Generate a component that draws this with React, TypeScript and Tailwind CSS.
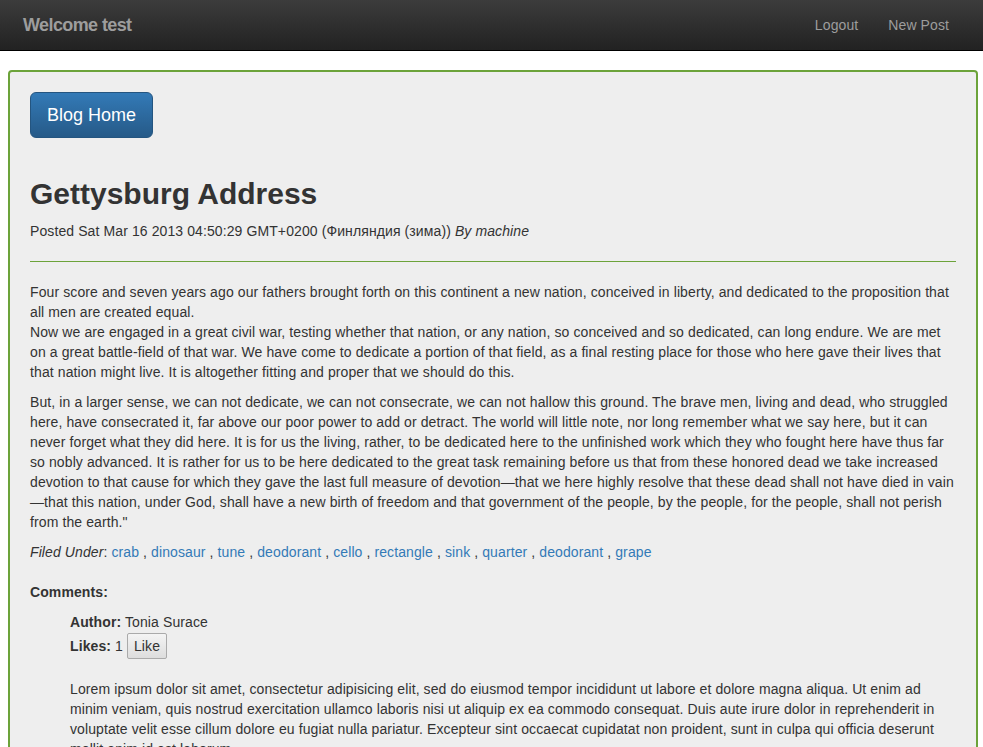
const tags = ["crab", "dinosaur", "tune", "deodorant", "cello", "rectangle", "sink", "quarter", "deodorant", "grape"];

export default function App() {
  return (
    <div className="min-h-screen bg-white text-[14px] leading-[20px] tracking-[0.1px] text-[#333] font-['Liberation_Sans',Arial,sans-serif]">
      {/* Navbar */}
      <nav className="h-[51px] bg-linear-to-b from-[#3c3c3c] to-[#222] border-b border-black flex items-center justify-between px-[23px]">
        <span className="text-[18px] font-bold tracking-[-0.6px] text-[#9d9d9d]">Welcome test</span>
        <div className="flex gap-[30px] text-[#9d9d9d] pr-[11px]">
          <a>Logout</a>
          <a>New Post</a>
        </div>
      </nav>

      {/* Post panel */}
      <div className="ml-[8px] w-[970px] mt-[19px] border-2 border-[#6ca33a] rounded-[4px] bg-[#eee] px-[20px] pt-[20px] pb-[20px]">
        <button className="h-[46px] px-[16px] rounded-[6px] text-[18px] tracking-normal text-white bg-linear-to-b from-[#337ab7] to-[#265a88] border border-[#245580]">
          Blog Home
        </button>

        <h1 className="mt-[39px] text-[30px] leading-[33px] font-bold tracking-normal">Gettysburg Address</h1>
        <p className="mt-[11px]">
          Posted Sat Mar 16 2013 04:50:29 GMT+0200 (Финляндия (зима)) <i>By machine</i>
        </p>
        <div className="mt-[20px] mb-[20px] border-t border-solid border-[#6ca33a]" />

        <p className="mb-[10px]">
          Four score and seven years ago our fathers brought forth on this continent a new nation, conceived in liberty, and dedicated to the proposition that all men are created equal.
          <br />
          Now we are engaged in a great civil war, testing whether that nation, or any nation, so conceived and so dedicated, can long endure. We are met on a great battle-field of that war. We have come to dedicate a portion of that field, as a final resting place for those who here gave their lives that that nation might live. It is altogether fitting and proper that we should do this.
        </p>
        <p className="mb-[10px]">
          But, in a larger sense, we can not dedicate, we can not consecrate, we can not hallow this ground. The brave men, living and dead, who struggled here, have consecrated it, far above our poor power to add or detract. The world will little note, nor long remember what we say here, but it can never forget what they did here. It is for us the living, rather, to be dedicated here to the unfinished work which they who fought here have thus far so nobly advanced. It is rather for us to be here dedicated to the great task remaining before us that from these honored dead we take increased devotion to that cause for which they gave the last full measure of devotion<wbr />—that we here highly resolve that these dead shall not have died in vain<wbr />—that this nation, under God, shall have a new birth of freedom and that government of the people, by the people, for the people, shall not perish from the earth."
        </p>
        <p>
          <i>Filed Under</i>:{" "}
          {tags.map((t, i) => (
            <span key={i}>
              <a className="text-[#337ab7]">{t}</a>
              {i < tags.length - 1 ? " , " : ""}
            </span>
          ))}
        </p>

        <p className="mt-[20px] font-bold">Comments:</p>
        <div className="pl-[40px] mt-[10px]">
          <div>
            <b>Author:</b> Tonia Surace
          </div>
          <div className="flex items-center mt-[1px]">
            <b>Likes:</b>&nbsp;1&nbsp;
            <button className="h-[26px] px-[6px] border border-[#aaa] rounded-[2px] bg-linear-to-b from-[#f4f4f4] to-[#ddd] text-[14px]">
              Like
            </button>
          </div>
          <p className="mt-[20px]">
            Lorem ipsum dolor sit amet, consectetur adipisicing elit, sed do eiusmod tempor incididunt ut labore et dolore magna aliqua. Ut enim ad minim veniam, quis nostrud exercitation ullamco laboris nisi ut aliquip ex ea commodo consequat. Duis aute irure dolor in reprehenderit in voluptate velit esse cillum dolore eu fugiat nulla pariatur. Excepteur sint occaecat cupidatat non proident, sunt in culpa qui officia deserunt mollit anim id est laborum.
          </p>
        </div>
      </div>
    </div>
  );
}
